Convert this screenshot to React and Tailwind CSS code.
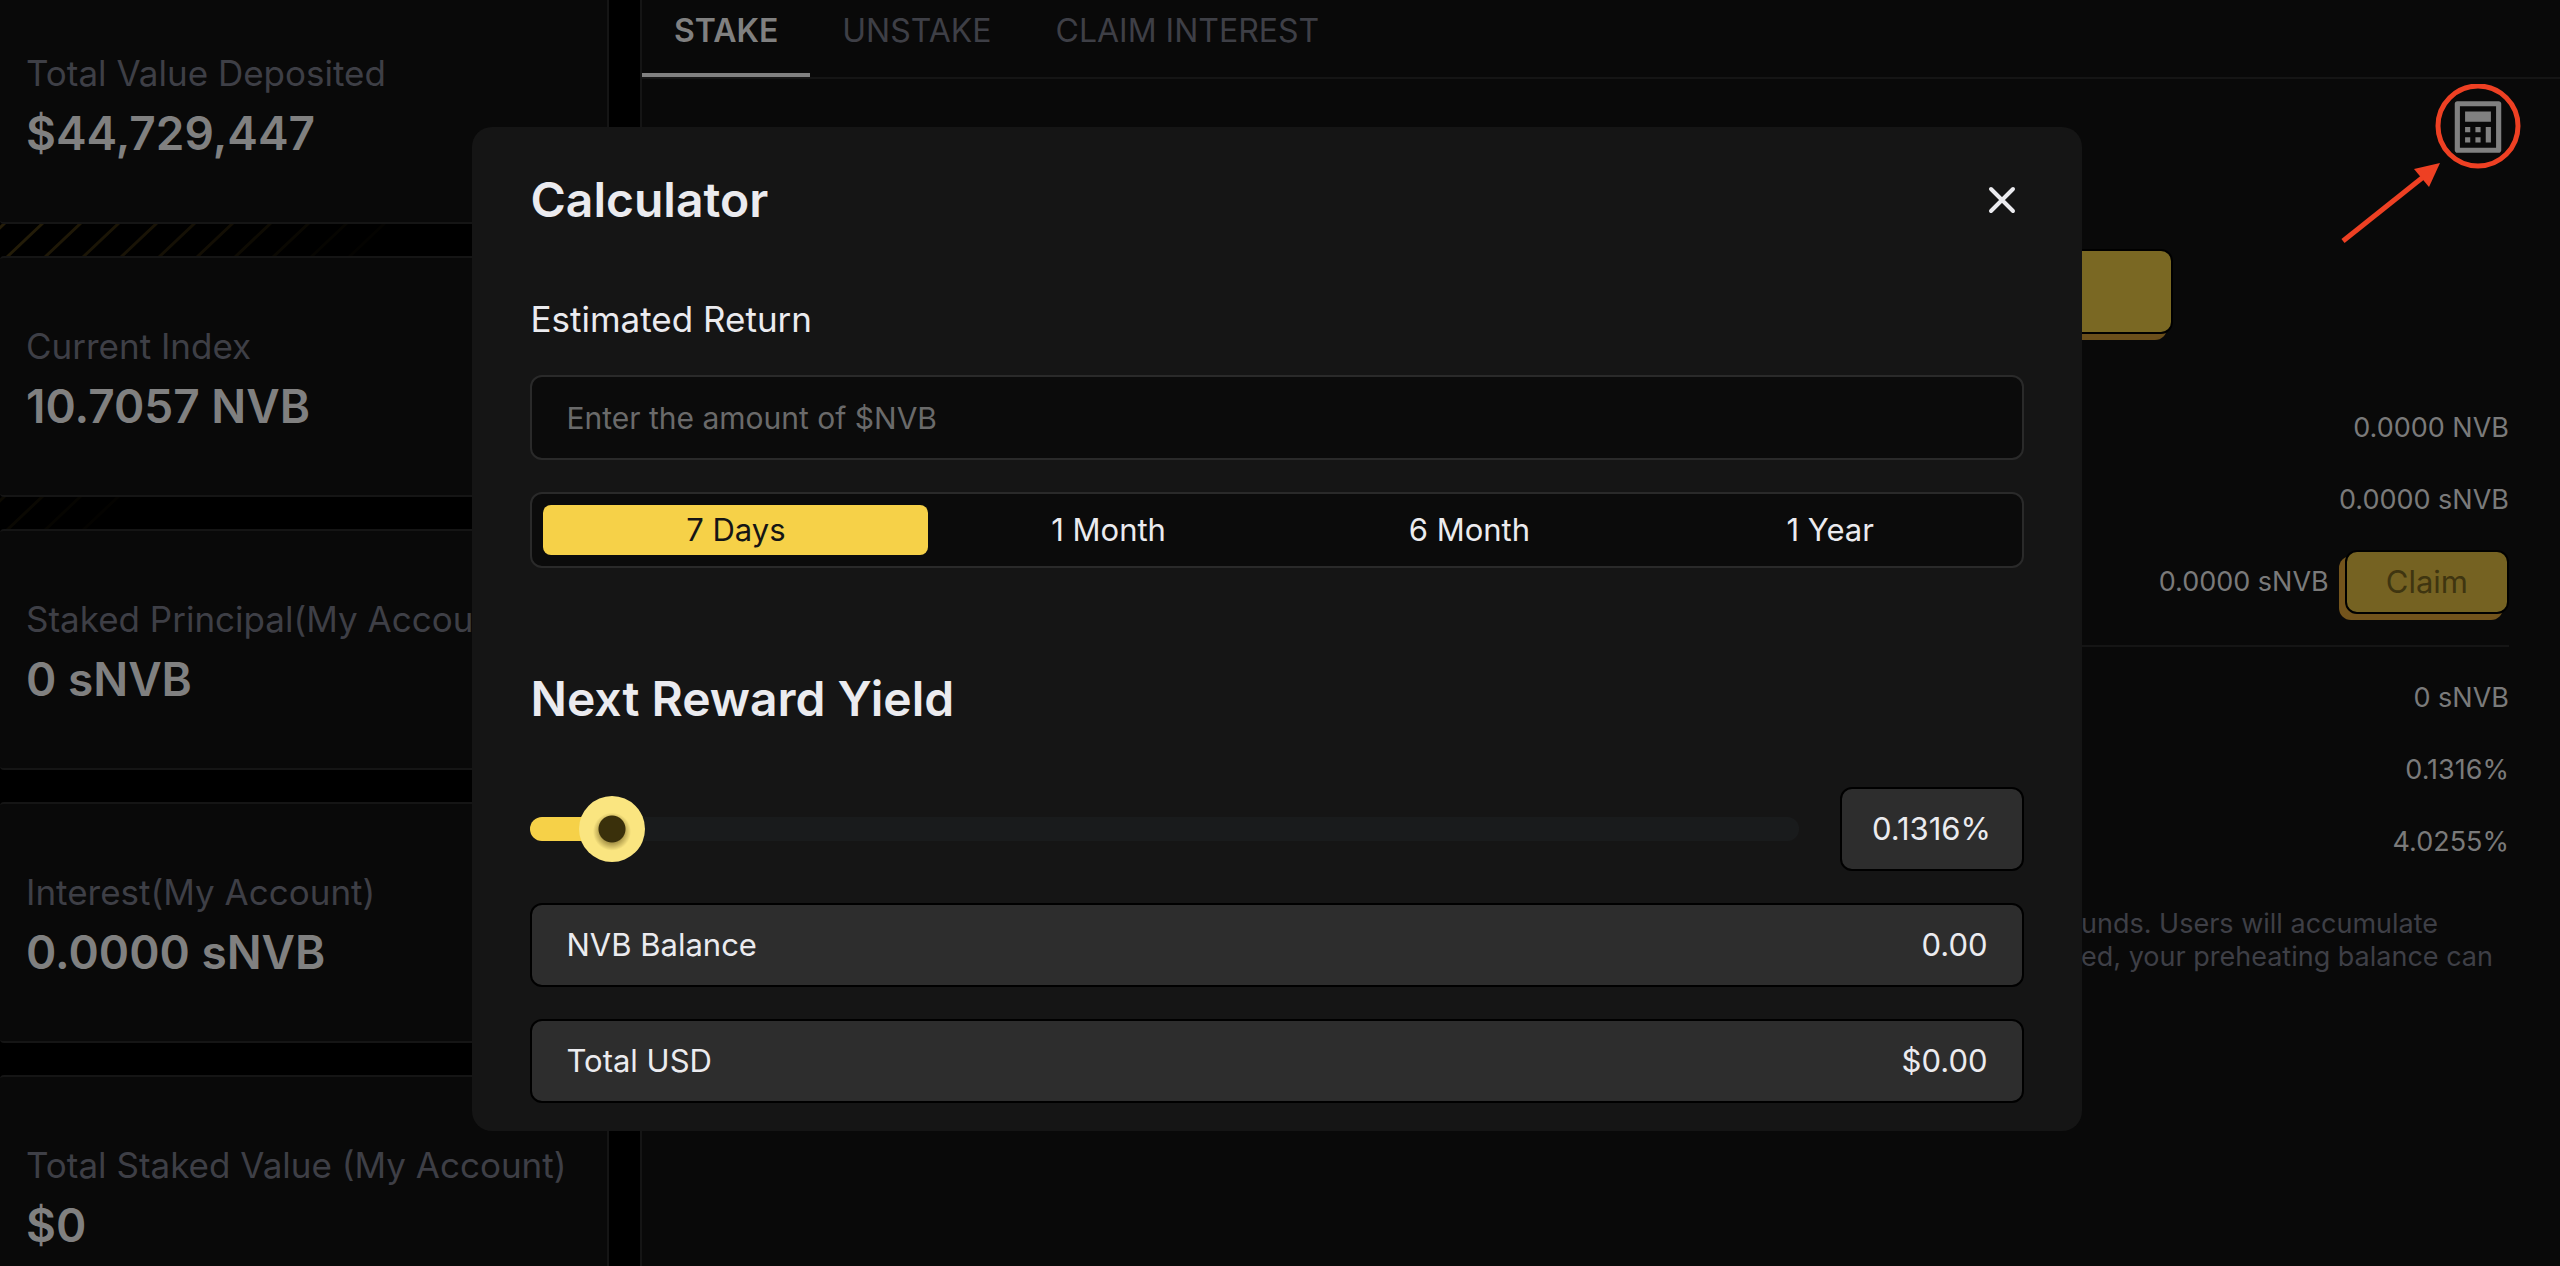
import React, { useState } from "react";
import { RiCalculatorLine } from "react-icons/ri";

// ================= DATA =================
const STATS = [
  { label: "Total Value Deposited", value: "$44,729,447", stripes: [0.9, 0.85, 0.75, 0.65, 0.6, 0.5, 0.45, 0.35, 0.25, 0.15, 0.1] },
  { label: "Current Index", value: "10.7057 NVB", stripes: [0.3, 0.25, 0.15, 0.1] },
  { label: "Staked Principal(My Account)", value: "0 sNVB", stripes: [] },
  { label: "Interest(My Account)", value: "0.0000 sNVB", stripes: [] },
  { label: "Total Staked Value (My Account)", value: "$0" },
];

const TABS = ["STAKE", "UNSTAKE", "CLAIM INTEREST"];

const PERIODS = ["7 Days", "1 Month", "6 Month", "1 Year"];

const MAX_YIELD = 3.25;

// ================= SIDEBAR =================
const Stripes = ({ levels }) => (
  <svg className="block h-8 w-full" aria-hidden="true">
    {levels.map((level, i) => (
      <line
        key={i}
        x1={i * 38 - 31}
        y1="33"
        x2={i * 38 + 5}
        y2="-1"
        stroke="#2a210a"
        strokeWidth="3"
        opacity={level}
      />
    ))}
  </svg>
);

const Sidebar = () => (
  <aside className="-mt-[17px] w-[609px] shrink-0">
    {STATS.map((item) => (
      <React.Fragment key={item.label}>
        <div className="rounded-sm border-y-2 border-r-2 border-[#151515] bg-[#090909] py-[58px] pl-[26px] whitespace-nowrap">
          <p className="text-[35px] leading-[60px] text-[#3e3f46]">{item.label}</p>
          <p className="text-[46px] leading-[61px] font-semibold text-[#808080]">{item.value}</p>
        </div>
        {item.stripes && <Stripes levels={item.stripes} />}
      </React.Fragment>
    ))}
  </aside>
);

// ================= STAKE PANEL =================
const Row = ({ children }) => (
  <div className="flex h-[72px] items-center justify-end text-[27px] text-[#7a7a7a]">
    {children}
  </div>
);

const StakePanel = ({ onOpen }) => {
  const [tab, setTab] = useState("STAKE");

  return (
    <main className="min-w-0 flex-1 border-l-2 border-[#151515] bg-[#090909]">
      <nav className="flex h-[79px] border-b-2 border-[#151515]">
        {TABS.map((name) => (
          <button
            key={name}
            onClick={() => setTab(name)}
            className={
              tab === name
                ? "border-b-4 border-[#808080] px-8 pb-3 text-[32px] font-semibold text-[#808080]"
                : "border-b-4 border-transparent px-8 pb-3 text-[32px] text-[#3e3f46]"
            }
          >
            {name}
          </button>
        ))}
      </nav>

      <div className="px-[51px] pt-[17px]">
        <div className="flex justify-end">
          <div className="relative">
            <button aria-label="Open calculator" onClick={onOpen} className="block text-[#808080]">
              <RiCalculatorLine size={62} />
            </button>
            {/* highlight ring and arrow */}
            <svg
              className="pointer-events-none absolute -top-3 -left-[107px]"
              width="182"
              height="162"
              viewBox="0 0 182 162"
              fill="none"
              aria-hidden="true"
            >
              <circle cx="138" cy="42" r="40" stroke="#ee4023" strokeWidth="5" />
              <path d="M3 157 L87 90" stroke="#ee4023" strokeWidth="5" />
              <path d="M100 79 L74 85 L89 103 Z" fill="#ee4023" />
            </svg>
          </div>
        </div>

        <button
          aria-label="Stake"
          className="mx-auto mt-[91px] block h-[85px] w-[63%] rounded-xl border-2 border-black bg-[#7a6823] shadow-[-6px_6px_0_#6b4f1b]"
        />

        <div className="mt-[58px] border-b-2 border-[#151515] pb-[17px]">
          <Row>0.0000 NVB</Row>
          <Row>0.0000 sNVB</Row>
          <div className="flex h-[92px] items-center justify-end gap-4 text-[27px] text-[#7a7a7a]">
            0.0000 sNVB
            <button className="h-16 rounded-xl border-2 border-black bg-[#756222] px-[39px] text-[31px] text-[#3f3510] shadow-[-6px_6px_0_#73541c]">
              Claim
            </button>
          </div>
        </div>

        <div className="pt-[15px]">
          <Row>0 sNVB</Row>
          <Row>0.1316%</Row>
          <Row>4.0255%</Row>
        </div>

        <p className="mt-[29px] ml-auto w-[428px] text-[27px] leading-[33px] whitespace-nowrap text-[#3e3f46]">
          unds. Users will accumulate
          <br />
          ed, your preheating balance can
        </p>
      </div>
    </main>
  );
};

// ================= CALCULATOR =================
const ResultRow = ({ label, value }) => (
  <div className="mt-8 flex h-[84px] items-center justify-between rounded-xl border-2 border-black bg-[#2d2d2d] px-[34px] text-[31px]">
    <span>{label}</span>
    <span>{value}</span>
  </div>
);

const Calculator = ({ onClose }) => {
  const [amount, setAmount] = useState("");
  const [period, setPeriod] = useState("7 Days");
  const [rate, setRate] = useState(0.1316);

  const ratio = rate / MAX_YIELD;
  const balance = Number(amount) || 0;

  return (
    <div className="fixed inset-0 flex items-center justify-center pr-1.5 pb-2">
      <div
        role="dialog"
        aria-labelledby="calculator-title"
        className="w-[63%] rounded-[20px] bg-[#151515] px-[58px] pt-[42px] pb-7 text-[#ebebef]"
      >
        <div className="flex items-center justify-between">
          <h2 id="calculator-title" className="text-[48px] leading-[62px] font-semibold">
            Calculator
          </h2>
          <button aria-label="Close" onClick={onClose} className="pr-2">
            <svg width="28" height="28" viewBox="0 0 28 28" aria-hidden="true">
              <path d="M3 3 L25 25 M25 3 L3 25" stroke="#ebebef" strokeWidth="4" strokeLinecap="round" />
            </svg>
          </button>
        </div>

        <label htmlFor="amount" className="mt-16 block text-[35px] leading-[48px]">
          Estimated Return
        </label>
        <input
          id="amount"
          type="text"
          value={amount}
          onChange={(e) => setAmount(e.target.value)}
          placeholder="Enter the amount of $NVB"
          className="mt-8 block h-[85px] w-full rounded-xl border-2 border-[#2a2a2a] bg-[#0b0b0b] px-[34px] text-[30px] outline-none placeholder:text-[#6a6a6a]"
        />

        <div className="mt-8 grid h-[76px] grid-cols-[385fr_361fr_361fr_361fr] rounded-xl border-2 border-[#2a2a2a] bg-[#0b0b0b] p-[11px] text-[31px]">
          {PERIODS.map((name) => (
            <button
              key={name}
              onClick={() => setPeriod(name)}
              className={
                period === name
                  ? "flex items-center justify-center rounded-lg bg-[#f6d148] text-[#151515]"
                  : "flex items-center justify-center rounded-lg"
              }
            >
              {name}
            </button>
          ))}
        </div>

        <h3 className="mt-[100px] text-[48px] leading-[62px] font-semibold">Next Reward Yield</h3>

        <div className="mt-[57px] flex items-center gap-[41px]">
          <input
            type="range"
            aria-label="Next reward yield"
            min="0"
            max={MAX_YIELD}
            step="any"
            value={rate}
            onChange={(e) => setRate(Number(e.target.value))}
            style={{
              backgroundImage: `linear-gradient(to right, #f6d148 calc(33px + (100% - 66px) * ${ratio}), #191b1c 0)`,
            }}
            className="h-6 min-w-0 flex-1 appearance-none rounded-full outline-none [&::-webkit-slider-thumb]:h-[66px] [&::-webkit-slider-thumb]:w-[66px] [&::-webkit-slider-thumb]:appearance-none [&::-webkit-slider-thumb]:rounded-full [&::-webkit-slider-thumb]:bg-[radial-gradient(circle_at_50%_50%,#3a300b_13px,transparent_14px),radial-gradient(circle_at_50%_54%,#b09c4c_12px,#fae580_19px)]"
          />
          <div className="flex h-[84px] w-[184px] items-center justify-center rounded-xl border-2 border-black bg-[#2d2d2d] text-[31px]">
            {rate.toFixed(4)}%
          </div>
        </div>

        <ResultRow label="NVB Balance" value={balance.toFixed(2)} />
        <ResultRow label="Total USD" value={`$${balance.toFixed(2)}`} />
      </div>
    </div>
  );
};

const App = () => {
  const [open, setOpen] = useState(true);

  return (
    <div className="flex h-screen gap-[31px] overflow-hidden bg-black font-['Inter',sans-serif]">
      <Sidebar />
      <StakePanel onOpen={() => setOpen(true)} />
      {open && <Calculator onClose={() => setOpen(false)} />}
    </div>
  );
};

export default App;
